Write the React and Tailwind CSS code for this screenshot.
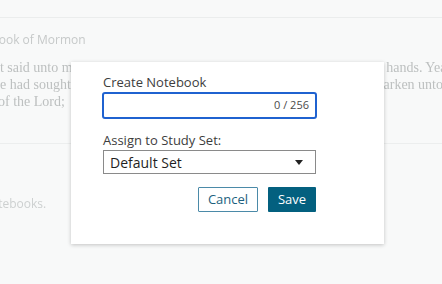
import React from "react";

// faded page that sits behind the dialog
function BackgroundPage() {
    return (
        <div className="h-full overflow-hidden blur-[0.7px] select-none">
            <div className="h-[18px] border-b border-[#ebeded]" />
            <div className="pt-[14px] ml-[-9px] text-[12px] leading-[16px] text-[#c6c9c9] font-['Open_Sans',sans-serif] whitespace-nowrap">
                Book of Mormon
            </div>
            <div className="mt-[11px] font-['Liberation_Serif',serif] text-[14px] leading-[17px] text-[#bdc0c0] whitespace-nowrap">
                <div className="flex justify-between">
                    <span className="ml-[-4px]">it said unto me again: Slay him</span>
                    <span className="mr-[-8px]">thy hands. Yea,</span>
                </div>
                <div className="flex justify-between">
                    <span className="ml-[-7px]">he had sought to take away</span>
                    <span className="mr-[-1px]">hearken unto</span>
                </div>
                <div className="flex justify-between">
                    <span className="ml-[-2px]">of the Lord;</span>
                </div>
            </div>
            <div className="mt-[33px] border-b border-[#eceeee]" />
            <div className="mt-[52px] ml-[-18px] text-[12px] leading-[16px] text-[#cdd0d0] font-['Open_Sans',sans-serif] whitespace-nowrap">
                Notebooks.
            </div>
        </div>
    );
}

function CaretDown() {
    return (
        <svg width="8" height="5" viewBox="0 0 8 5" className="block">
            <path d="M0 0 H8 L4 5 Z" fill="#222" />
        </svg>
    );
}

export default function App() {
    return (
        <div className="relative w-[442px] h-[284px] bg-[#f8f9f9] overflow-hidden font-['Open_Sans',sans-serif]">
            <BackgroundPage />

            {/* dialog */}
            <div className="absolute left-[71px] top-[62px] w-[313px] h-[182px] bg-white shadow-[0_1px_4px_rgba(0,0,0,0.22)] pl-[32px] pt-[11px]">
                <label className="block text-[13px] leading-[18px] text-[#3d3d3d]">Create Notebook</label>
                <div className="mt-[1px] ml-[-1px] w-[215px] h-[27px] border-2 border-[#1f62d0] rounded-[3px] flex items-center justify-end pr-[6px]">
                    <span className="text-[11px] text-[#4a4a4a]">0 / 256</span>
                </div>

                <label className="block mt-[12px] text-[13px] leading-[18px] text-[#3d3d3d]">Assign to Study Set:</label>
                <div className="mt-[1px] w-[213px] h-[24px] border border-[#8a8a8a] flex items-center justify-between pl-[6px] pr-[12px]">
                    <span className="text-[14px] text-[#1f1f1f]">Default Set</span>
                    <CaretDown />
                </div>

                <div className="mt-[13px] w-[213px] flex justify-end gap-[10px]">
                    <button className="w-[60px] h-[25px] border border-[#4b8aa8] rounded-[1px] text-[13px] text-[#1c5f7e] bg-white">
                        Cancel
                    </button>
                    <button className="w-[48px] h-[25px] rounded-[1px] text-[13px] text-white bg-[#03607f]">
                        Save
                    </button>
                </div>
            </div>
        </div>
    );
}
